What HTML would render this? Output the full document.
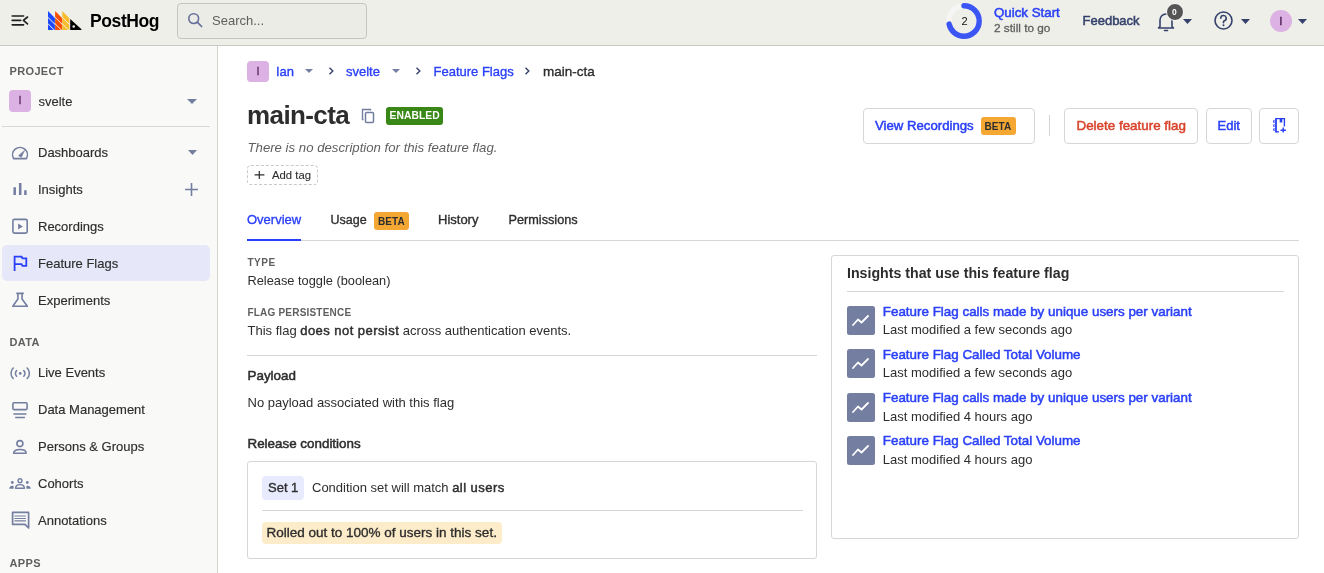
<!DOCTYPE html>
<html><head><meta charset="utf-8"><title>main-cta • Feature Flags • PostHog</title>
<style>
html,body{margin:0;padding:0;width:1324px;height:573px;overflow:hidden;background:#fff;font-family:"Liberation Sans", sans-serif;}
#root{position:absolute;left:0;top:0;width:1324px;height:573px;will-change:transform;}
.t{position:absolute;white-space:nowrap;}
.r{position:absolute;}
</style></head><body><div id="root">
<div class="r" style="left:0px;top:0px;width:1324px;height:45px;background:#eeefe9"></div>
<div class="r" style="left:0px;top:45px;width:1324px;height:1px;background:#c9cac4"></div>
<svg class="r" style="left:11px;top:14px" width="18" height="13" viewBox="0 0 18 13"><path d="M1.2 2H12.6M1.2 6.4H9.7M1.2 10.8H12.6M16.5 3L12.4 6.4L16.5 9.9" stroke="#1f1f1f" stroke-width="1.65" fill="none" stroke-linecap="round" stroke-linejoin="round"/></svg>
<svg class="r" style="left:48px;top:11px" width="35" height="20" viewBox="0 0 35 20"><path d="M0.00 0 L7.15 7.15 V19 H0.00 Z" fill="#1d4aff"/><path d="M-0.50 5.90 L7.60 14.00" stroke="#eeefe9" stroke-width="1.0"/><path d="M-0.50 12.30 L7.60 20.40" stroke="#eeefe9" stroke-width="1.0"/><path d="M7.15 0 V19" stroke="#eeefe9" stroke-width="0.25"/><path d="M7.15 0 L14.30 7.15 V19 H7.15 Z" fill="#f54e00"/><path d="M6.65 5.90 L14.75 14.00" stroke="#eeefe9" stroke-width="1.0"/><path d="M6.65 12.30 L14.75 20.40" stroke="#eeefe9" stroke-width="1.0"/><path d="M14.30 0 V19" stroke="#eeefe9" stroke-width="0.25"/><path d="M14.30 0 L21.45 7.15 V19 H14.30 Z" fill="#f9bd2b"/><path d="M13.80 5.90 L21.90 14.00" stroke="#eeefe9" stroke-width="1.0"/><path d="M13.80 12.30 L21.90 20.40" stroke="#eeefe9" stroke-width="1.0"/><path d="M21.45 0 V19" stroke="#eeefe9" stroke-width="0.25"/><path d="M22.2 7.9 L33.2 18.1 Q34.2 19 33 19 H22.2 Z" fill="#000"/><circle cx="25.7" cy="15.4" r="1.25" fill="#eeefe9"/></svg>
<div class="t" id="t0" style="left:90px;top:13.00px;font-size:17.5px;line-height:17.5px;color:#000;font-weight:700;letter-spacing:-0.4px;">PostHog</div>
<div class="r" style="left:177px;top:3px;width:190px;height:36px;border:1px solid #c4c5bf;border-radius:4px;box-sizing:border-box;background:#ebece6"></div>
<svg class="r" style="left:187px;top:12px" width="17" height="17" viewBox="0 0 17 17"><circle cx="6.7" cy="6.6" r="4.9" stroke="#67709a" stroke-width="1.6" fill="none"/><path d="M10.3 10.2L14.6 14.5" stroke="#67709a" stroke-width="1.7" stroke-linecap="round"/></svg>
<div class="t" id="t1" style="left:212px;top:14.01px;font-size:13px;line-height:13px;color:#5f5f5f;">Search...</div>
<svg class="r" style="left:946px;top:3px" width="36" height="36" viewBox="0 0 36 36"><circle cx="18" cy="18" r="15.2" stroke="#f5f5f3" stroke-width="5.4" fill="none"/><circle cx="18" cy="18" r="15.2" stroke="#3b55f5" stroke-width="5.4" fill="none" stroke-dasharray="68 100" stroke-linecap="round" transform="rotate(-90 18 18)"/></svg>
<div class="t" id="t2" style="left:961.5px;top:16.01px;font-size:11px;line-height:11px;color:#111;">2</div>
<div class="t" id="t3" style="left:994px;top:6.01px;font-size:13.3px;line-height:13.3px;color:#2a40f8;-webkit-text-stroke:0.5px #2a40f8;">Quick Start</div>
<div class="t" id="t4" style="left:994px;top:23.00px;font-size:11.8px;line-height:11.8px;color:#5f5f5f;-webkit-text-stroke:0.3px #5f5f5f;">2 still to go</div>
<div class="t" id="t5" style="left:1082.5px;top:14.01px;font-size:13px;line-height:13px;color:#35416b;-webkit-text-stroke:0.5px #35416b;">Feedback</div>
<svg class="r" style="left:1157px;top:11px" width="18" height="21" viewBox="0 0 18 21"><path d="M3 15.5 V9 A6 6 0 0 1 15 9 V15.5 L16.5 17 H1.5 Z" stroke="#35416b" stroke-width="1.6" fill="none" stroke-linejoin="round"/><path d="M7.5 19.5 H10.5" stroke="#35416b" stroke-width="1.6" stroke-linecap="round"/></svg>
<div class="r" style="left:1166px;top:3px;width:18px;height:18px;background:#555;border:1.5px solid #fff;border-radius:50%;box-sizing:border-box"></div>
<div class="t" id="t6" style="left:1172px;top:8.01px;font-size:8.5px;line-height:8.5px;color:#fff;font-weight:700;">0</div>
<svg class="r" style="left:1183px;top:19px" width="9" height="5" viewBox="0 0 9 5"><path d="M0 0H9L4.5 5Z" fill="#35416b"/></svg>
<svg class="r" style="left:1214px;top:11px" width="19" height="19" viewBox="0 0 19 19"><circle cx="9.5" cy="9.5" r="8.5" stroke="#35416b" stroke-width="1.6" fill="none"/><path d="M6.8 7.3 A2.7 2.7 0 1 1 10.4 9.8 C9.7 10.1 9.5 10.5 9.5 11.3 V11.8" stroke="#35416b" stroke-width="1.6" fill="none" stroke-linecap="round"/><circle cx="9.5" cy="14.3" r="1" fill="#35416b"/></svg>
<svg class="r" style="left:1240.5px;top:19px" width="9" height="5" viewBox="0 0 9 5"><path d="M0 0H9L4.5 5Z" fill="#35416b"/></svg>
<div class="r" style="left:1270px;top:10px;width:22px;height:22px;background:#dcb1e3;border-radius:50%"></div>
<div class="t" id="t7" style="left:1279.3px;top:16.01px;font-size:11.5px;line-height:11.5px;color:#4f2259;-webkit-text-stroke:0.4px #4f2259;">I</div>
<svg class="r" style="left:1298px;top:19px" width="9" height="5" viewBox="0 0 9 5"><path d="M0 0H9L4.5 5Z" fill="#35416b"/></svg>
<div class="r" style="left:0px;top:46px;width:217px;height:527px;background:#f9f9f7"></div>
<div class="r" style="left:217px;top:46px;width:1px;height:527px;background:#d3d4ce"></div>
<div class="t" id="t8" style="left:9.5px;top:66.01px;font-size:11px;line-height:11px;color:#5f5f5f;font-weight:700;letter-spacing:0.35px;">PROJECT</div>
<div class="r" style="left:9px;top:90px;width:22px;height:22px;background:#dcb1e3;border-radius:4px"></div>
<div class="t" id="t9" style="left:18.5px;top:95.01px;font-size:11px;line-height:11px;color:#5b2a63;-webkit-text-stroke:0.3px #5b2a63;">I</div>
<div class="t" id="t10" style="left:38.5px;top:95.01px;font-size:13px;line-height:13px;color:#2d2d2d;-webkit-text-stroke:0.1px #2d2d2d;">svelte</div>
<svg class="r" style="left:187px;top:99px" width="10" height="5" viewBox="0 0 10 5"><path d="M0 0H10L5.0 5Z" fill="#747ea1"/></svg>
<div class="r" style="left:2px;top:126px;width:208px;height:1px;background:#d8d8d6"></div>
<div class="r" style="left:2px;top:245px;width:208px;height:36px;background:#e6e8f9;border-radius:5px"></div>
<div class="t" id="t11" style="left:38px;top:146.01px;font-size:13px;line-height:13px;color:#2d2d2d;-webkit-text-stroke:0.15px #2d2d2d;">Dashboards</div>
<div class="t" id="t12" style="left:38px;top:183.01px;font-size:13px;line-height:13px;color:#2d2d2d;-webkit-text-stroke:0.15px #2d2d2d;">Insights</div>
<div class="t" id="t13" style="left:38px;top:220.01px;font-size:13px;line-height:13px;color:#2d2d2d;-webkit-text-stroke:0.15px #2d2d2d;">Recordings</div>
<div class="t" id="t14" style="left:38px;top:257.01px;font-size:13px;line-height:13px;color:#2d2d2d;-webkit-text-stroke:0.15px #2d2d2d;">Feature Flags</div>
<div class="t" id="t15" style="left:38px;top:294.01px;font-size:13px;line-height:13px;color:#2d2d2d;-webkit-text-stroke:0.15px #2d2d2d;">Experiments</div>
<svg class="r" style="left:188px;top:150px" width="9" height="5" viewBox="0 0 9 5"><path d="M0 0H9L4.5 5Z" fill="#747ea1"/></svg>
<svg class="r" style="left:184px;top:182px" width="15" height="15" viewBox="0 0 15 15"><path d="M7.5 1V14M1 7.5H14" stroke="#747ea1" stroke-width="1.6"/></svg>
<svg class="r" style="left:11px;top:146px" width="18" height="14" viewBox="0 0 18 14"><path d="M2.6 12.6 A7.4 7.4 0 1 1 15.4 12.6 Z" stroke="#747ea1" stroke-width="1.6" fill="none" stroke-linejoin="round"/><path d="M7.6 9.6 L13.6 4.4 L10.2 11.4 Z" fill="#747ea1" stroke="#747ea1" stroke-width="0.6" stroke-linejoin="round"/></svg>
<svg class="r" style="left:12px;top:182px" width="16" height="15" viewBox="0 0 16 15"><path d="M2.7 5.3V13.1M8.2 1V13.1M13.4 8.2V13.1" stroke="#747ea1" stroke-width="2.5"/></svg>
<svg class="r" style="left:12px;top:218px" width="17" height="17" viewBox="0 0 17 17"><rect x="0.9" y="1.4" width="14.3" height="13.7" rx="1.5" stroke="#747ea1" stroke-width="1.6" fill="none"/><path d="M6.1 5.6V11.4L10.8 8.5Z" fill="#747ea1"/></svg>
<svg class="r" style="left:12px;top:254px" width="17" height="19" viewBox="0 0 17 19"><path d="M2.6 16.9V2.7H9.6L10.5 4.3H14.3V11.8H10.5L9.6 10.1H2.6" stroke="#2a40f8" stroke-width="1.8" fill="none" stroke-linejoin="miter"/></svg>
<svg class="r" style="left:11px;top:291px" width="18" height="17" viewBox="0 0 18 17"><path d="M5.3 2.4H12.8M6.9 2.4V8L1.8 15.3H16.4L11 8V2.4" stroke="#747ea1" stroke-width="1.6" fill="none" stroke-linejoin="round"/></svg>
<div class="t" id="t16" style="left:9.5px;top:337.01px;font-size:11px;line-height:11px;color:#5f5f5f;font-weight:700;letter-spacing:0.35px;">DATA</div>
<div class="t" id="t17" style="left:38px;top:366.01px;font-size:13px;line-height:13px;color:#2d2d2d;-webkit-text-stroke:0.15px #2d2d2d;">Live Events</div>
<div class="t" id="t18" style="left:38px;top:403.01px;font-size:13px;line-height:13px;color:#2d2d2d;-webkit-text-stroke:0.15px #2d2d2d;">Data Management</div>
<div class="t" id="t19" style="left:38px;top:440.01px;font-size:13px;line-height:13px;color:#2d2d2d;-webkit-text-stroke:0.15px #2d2d2d;">Persons &amp; Groups</div>
<div class="t" id="t20" style="left:38px;top:477.01px;font-size:13px;line-height:13px;color:#2d2d2d;-webkit-text-stroke:0.15px #2d2d2d;">Cohorts</div>
<div class="t" id="t21" style="left:38px;top:514.01px;font-size:13px;line-height:13px;color:#2d2d2d;-webkit-text-stroke:0.15px #2d2d2d;">Annotations</div>
<svg class="r" style="left:9px;top:365px" width="21" height="16" viewBox="0 0 21 16"><path d="M4.3 3 A7.5 7.5 0 0 0 4.3 13.6M18.1 3 A7.5 7.5 0 0 1 18.1 13.6M7.6 5.6 A4 4 0 0 0 7.6 11.2M14.8 5.6 A4 4 0 0 1 14.8 11.2" stroke="#747ea1" stroke-width="1.5" fill="none" stroke-linecap="round" stroke-dasharray="3.2 0.9"/><circle cx="11.2" cy="8.4" r="1.4" fill="#747ea1"/></svg>
<svg class="r" style="left:11px;top:401px" width="18" height="19" viewBox="0 0 18 19"><rect x="1.9" y="1.8" width="14.2" height="6.8" rx="1" stroke="#747ea1" stroke-width="1.6" fill="none"/><path d="M2.4 13H15.5M4.2 16.5H13.9" stroke="#747ea1" stroke-width="1.5"/></svg>
<svg class="r" style="left:12px;top:437px" width="16" height="18" viewBox="0 0 16 18"><circle cx="7.9" cy="6.6" r="3.0" stroke="#747ea1" stroke-width="1.6" fill="none"/><path d="M1.6 16.3C1.6 13.8 4 12.6 7.9 12.6S14.2 13.8 14.2 16.3Z" stroke="#747ea1" stroke-width="1.5" fill="none" stroke-linejoin="round"/></svg>
<svg class="r" style="left:9px;top:477px" width="22" height="13" viewBox="0 0 22 13"><circle cx="11" cy="3.7" r="1.9" stroke="#747ea1" stroke-width="1.4" fill="none"/><path d="M6.6 11.2C6.6 8.6 8.6 7.6 11 7.6S15.4 8.6 15.4 11.2Z" stroke="#747ea1" stroke-width="1.4" fill="none" stroke-linejoin="round"/><circle cx="3.3" cy="5.5" r="1.4" fill="#747ea1"/><circle cx="18.3" cy="5.5" r="1.4" fill="#747ea1"/><path d="M0.3 11.8C0.3 9.8 1.5 8.8 3.5 8.8L4.6 8.9V11.8Z M21.7 11.8C21.7 9.8 20.5 8.8 18.5 8.8L17.4 8.9V11.8Z" fill="#747ea1"/></svg>
<svg class="r" style="left:11px;top:511px" width="19" height="19" viewBox="0 0 19 19"><path d="M1.6 1.3H17.6V17L14 13.3H1.6Z" stroke="#747ea1" stroke-width="1.7" fill="none" stroke-linejoin="round"/><path d="M3.4 5H14.9M3.4 7.5H14.9M3.4 9.9H14.9" stroke="#747ea1" stroke-width="1.2"/></svg>
<div class="t" id="t22" style="left:9.5px;top:558.01px;font-size:11px;line-height:11px;color:#5f5f5f;font-weight:700;letter-spacing:0.35px;">APPS</div>
<div class="r" style="left:247px;top:61px;width:22px;height:21px;background:#dcb1e3;border-radius:4px"></div>
<div class="t" id="t23" style="left:256.5px;top:66.01px;font-size:11px;line-height:11px;color:#5b2a63;-webkit-text-stroke:0.3px #5b2a63;">I</div>
<div class="t" id="t24" style="left:276px;top:65.01px;font-size:13px;line-height:13px;color:#2a40f8;-webkit-text-stroke:0.35px #2a40f8;">Ian</div>
<svg class="r" style="left:305px;top:69px" width="8" height="4" viewBox="0 0 8 4"><path d="M0 0H8L4.0 4Z" fill="#747ea1"/></svg>
<svg class="r" style="left:328px;top:66px" width="7" height="10" viewBox="0 0 7 10"><path d="M1.5 1.8L4.8 5L1.5 8.2" stroke="#35416b" stroke-width="1.4" fill="none"/></svg>
<div class="t" id="t25" style="left:346px;top:65.01px;font-size:13px;line-height:13px;color:#2a40f8;-webkit-text-stroke:0.35px #2a40f8;">svelte</div>
<svg class="r" style="left:392px;top:69px" width="8" height="4" viewBox="0 0 8 4"><path d="M0 0H8L4.0 4Z" fill="#747ea1"/></svg>
<svg class="r" style="left:415px;top:66px" width="7" height="10" viewBox="0 0 7 10"><path d="M1.5 1.8L4.8 5L1.5 8.2" stroke="#35416b" stroke-width="1.4" fill="none"/></svg>
<div class="t" id="t26" style="left:433.5px;top:65.01px;font-size:13px;line-height:13px;color:#2a40f8;-webkit-text-stroke:0.35px #2a40f8;">Feature Flags</div>
<svg class="r" style="left:524px;top:66px" width="7" height="10" viewBox="0 0 7 10"><path d="M1.5 1.8L4.8 5L1.5 8.2" stroke="#35416b" stroke-width="1.4" fill="none"/></svg>
<div class="t" id="t27" style="left:543px;top:65.01px;font-size:13.5px;line-height:13.5px;color:#2d2d2d;-webkit-text-stroke:0.35px #2d2d2d;">main-cta</div>
<div class="t" id="t28" style="left:247px;top:102.01px;font-size:26px;line-height:26px;color:#2d2d2d;font-weight:700;letter-spacing:-0.6px;">main-cta</div>
<svg class="r" style="left:361px;top:108px" width="14" height="16" viewBox="0 0 14 16"><path d="M2.5 11.5H1.5V1.5H9.5V2.5" stroke="#747ea1" stroke-width="1.4" fill="none"/><rect x="4.5" y="4.5" width="8" height="10" rx="1" stroke="#747ea1" stroke-width="1.5" fill="none"/></svg>
<div class="r" style="left:386px;top:107px;width:57px;height:18px;background:#388717;border-radius:3px"></div>
<div class="t" id="t29" style="left:389.5px;top:111.00px;font-size:10.3px;line-height:10.3px;color:#fff;font-weight:700;letter-spacing:0.05px;">ENABLED</div>
<div class="t" id="t30" style="left:247.5px;top:141.01px;font-size:13.2px;line-height:13.2px;color:#5f5f5f;font-style:italic;">There is no description for this feature flag.</div>
<div class="r" style="left:247px;top:165px;width:71px;height:20px;border:1px dashed #c9cac4;border-radius:4px;box-sizing:border-box"></div>
<svg class="r" style="left:254px;top:170px" width="11" height="10" viewBox="0 0 11 10"><path d="M5.3 1V9M0.6 4.9H10.4" stroke="#2d2d2d" stroke-width="1.2"/></svg>
<div class="t" id="t31" style="left:272px;top:170.00px;font-size:11.3px;line-height:11.3px;color:#2d2d2d;-webkit-text-stroke:0.1px #2d2d2d;">Add tag</div>
<div class="r" style="left:863px;top:108px;width:172px;height:36px;border:1px solid #d6d6d4;border-radius:4px;box-sizing:border-box;background:#fff"></div>
<div class="t" id="t32" style="left:875px;top:119.01px;font-size:13.2px;line-height:13.2px;color:#2a40f8;-webkit-text-stroke:0.5px #2a40f8;">View Recordings</div>
<div class="r" style="left:981px;top:117px;width:35px;height:18px;background:#f5a734;border-radius:3px"></div>
<div class="t" id="t33" style="left:984.5px;top:122.00px;font-size:10px;line-height:10px;color:#2d2d2d;font-weight:700;letter-spacing:0.1px;">BETA</div>
<div class="r" style="left:1049px;top:115px;width:1px;height:21px;background:#d6d6d4"></div>
<div class="r" style="left:1064px;top:108px;width:134px;height:36px;border:1px solid #d6d6d4;border-radius:4px;box-sizing:border-box;background:#fff"></div>
<div class="t" id="t34" style="left:1076.5px;top:119.00px;font-size:13.4px;line-height:13.4px;color:#d8432a;-webkit-text-stroke:0.5px #d8432a;">Delete feature flag</div>
<div class="r" style="left:1206px;top:108px;width:46px;height:36px;border:1px solid #d6d6d4;border-radius:4px;box-sizing:border-box;background:#fff"></div>
<div class="t" id="t35" style="left:1217.5px;top:119.01px;font-size:13px;line-height:13px;color:#2a40f8;-webkit-text-stroke:0.5px #2a40f8;">Edit</div>
<div class="r" style="left:1259px;top:108px;width:40px;height:36px;border:1px solid #d6d6d4;border-radius:4px;box-sizing:border-box;background:#fff"></div>
<svg class="r" style="left:1272px;top:117px" width="16" height="17" viewBox="0 0 16 17"><path d="M4 1.6H12.4V9.5" stroke="#2a40f8" stroke-width="1.4" fill="none"/><path d="M4 1V15.5" stroke="#2a40f8" stroke-width="1.8"/><path d="M2.6 3.4A1 1 0 0 0 2.6 5.4M2.6 7.5A1 1 0 0 0 2.6 9.5M2.6 11.6A1 1 0 0 0 2.6 13.6" stroke="#2a40f8" stroke-width="1.1" fill="none"/><path d="M4 14.8H7" stroke="#2a40f8" stroke-width="1.3"/><rect x="7.7" y="1.5" width="2.6" height="4" fill="#2a40f8"/><path d="M11.2 10.5V15.5M8.5 13.2H14" stroke="#2a40f8" stroke-width="1.5"/></svg>
<div class="t" id="t36" style="left:247px;top:213.01px;font-size:13px;line-height:13px;color:#2a40f8;-webkit-text-stroke:0.35px #2a40f8;">Overview</div>
<div class="t" id="t37" style="left:330.5px;top:214.00px;font-size:12.5px;line-height:12.5px;color:#2d2d2d;-webkit-text-stroke:0.35px #2d2d2d;">Usage</div>
<div class="r" style="left:374px;top:212px;width:35px;height:18px;background:#f5a734;border-radius:3px"></div>
<div class="t" id="t38" style="left:378px;top:217.00px;font-size:10px;line-height:10px;color:#2d2d2d;font-weight:700;letter-spacing:0.1px;">BETA</div>
<div class="t" id="t39" style="left:438px;top:213.01px;font-size:13px;line-height:13px;color:#2d2d2d;-webkit-text-stroke:0.35px #2d2d2d;">History</div>
<div class="t" id="t40" style="left:508.5px;top:214.00px;font-size:12.7px;line-height:12.7px;color:#2d2d2d;-webkit-text-stroke:0.35px #2d2d2d;">Permissions</div>
<div class="r" style="left:247px;top:240px;width:1052px;height:1px;background:#d6d6d4"></div>
<div class="r" style="left:247px;top:239px;width:54px;height:2px;background:#2a40f8"></div>
<div class="t" id="t41" style="left:247.5px;top:258.00px;font-size:10px;line-height:10px;color:#5f5f5f;font-weight:700;letter-spacing:0.5px;">TYPE</div>
<div class="t" id="t42" style="left:247.5px;top:275.01px;font-size:12.8px;line-height:12.8px;color:#2d2d2d;">Release toggle (boolean)</div>
<div class="t" id="t43" style="left:247.5px;top:308.00px;font-size:10px;line-height:10px;color:#5f5f5f;font-weight:700;letter-spacing:0.2px;">FLAG PERSISTENCE</div>
<div class="t" id="t44" style="left:247.5px;top:324.01px;font-size:13px;line-height:13px;color:#2d2d2d;">This flag <b style="font-weight:400;-webkit-text-stroke:0.45px #2d2d2d;letter-spacing:0.45px">does not persist</b> across authentication events.</div>
<div class="r" style="left:247px;top:355px;width:570px;height:1px;background:#d6d6d4"></div>
<div class="t" id="t45" style="left:247.5px;top:369.00px;font-size:13.4px;line-height:13.4px;color:#2d2d2d;-webkit-text-stroke:0.5px #2d2d2d;">Payload</div>
<div class="t" id="t46" style="left:247.5px;top:396.01px;font-size:13px;line-height:13px;color:#2d2d2d;">No payload associated with this flag</div>
<div class="t" id="t47" style="left:247.5px;top:437.00px;font-size:13.4px;line-height:13.4px;color:#2d2d2d;-webkit-text-stroke:0.5px #2d2d2d;">Release conditions</div>
<div class="r" style="left:247px;top:461px;width:570px;height:98px;border:1px solid #d6d6d4;border-radius:3px;box-sizing:border-box"></div>
<div class="r" style="left:262px;top:476px;width:42px;height:24px;background:#e8ebfd;border-radius:4px"></div>
<div class="t" id="t48" style="left:268px;top:481.01px;font-size:13px;line-height:13px;color:#2d2d2d;-webkit-text-stroke:0.35px #2d2d2d;">Set 1</div>
<div class="t" id="t49" style="left:312px;top:481.01px;font-size:13px;line-height:13px;color:#2d2d2d;">Condition set will match <b style="font-weight:400;-webkit-text-stroke:0.45px #2d2d2d;letter-spacing:0.45px">all users</b></div>
<div class="r" style="left:262px;top:510px;width:541px;height:1px;background:#d6d6d4"></div>
<div class="r" style="left:262px;top:522px;width:240px;height:22px;background:#fdecc9;border-radius:4px"></div>
<div class="t" id="t50" style="left:266.5px;top:526.01px;font-size:13.5px;line-height:13.5px;color:#2d2d2d;-webkit-text-stroke:0.35px #2d2d2d;">Rolled out to 100% of users in this set.</div>
<div class="r" style="left:831px;top:255px;width:468px;height:284px;border:1px solid #d6d6d4;border-radius:3px;box-sizing:border-box"></div>
<div class="t" id="t51" style="left:847px;top:266.01px;font-size:14.2px;line-height:14.2px;color:#2d2d2d;font-weight:700;">Insights that use this feature flag</div>
<div class="r" style="left:847px;top:291px;width:437px;height:1px;background:#d6d6d4"></div>
<svg class="r" style="left:847px;top:305.5px" width="28" height="29" viewBox="0 0 28 29"><rect x="0" y="0" width="28" height="29" rx="2.5" fill="#747ea1"/><path d="M6 19L11 13.5L14.5 16.5L21 10" stroke="#fff" stroke-width="1.8" fill="none" stroke-linejoin="round" stroke-linecap="round"/></svg>
<div class="t" id="t52" style="left:882.8px;top:305.00px;font-size:13.4px;line-height:13.4px;color:#2a40f8;-webkit-text-stroke:0.5px #2a40f8;">Feature Flag calls made by unique users per variant</div>
<div class="t" id="t53" style="left:882.8px;top:323.00px;font-size:13px;line-height:13px;color:#2d2d2d;">Last modified a few seconds ago</div>
<svg class="r" style="left:847px;top:349px" width="28" height="29" viewBox="0 0 28 29"><rect x="0" y="0" width="28" height="29" rx="2.5" fill="#747ea1"/><path d="M6 19L11 13.5L14.5 16.5L21 10" stroke="#fff" stroke-width="1.8" fill="none" stroke-linejoin="round" stroke-linecap="round"/></svg>
<div class="t" id="t54" style="left:882.8px;top:348.00px;font-size:13.4px;line-height:13.4px;color:#2a40f8;-webkit-text-stroke:0.5px #2a40f8;">Feature Flag Called Total Volume</div>
<div class="t" id="t55" style="left:882.8px;top:366.01px;font-size:13px;line-height:13px;color:#2d2d2d;">Last modified a few seconds ago</div>
<svg class="r" style="left:847px;top:392.5px" width="28" height="29" viewBox="0 0 28 29"><rect x="0" y="0" width="28" height="29" rx="2.5" fill="#747ea1"/><path d="M6 19L11 13.5L14.5 16.5L21 10" stroke="#fff" stroke-width="1.8" fill="none" stroke-linejoin="round" stroke-linecap="round"/></svg>
<div class="t" id="t56" style="left:882.8px;top:391.01px;font-size:13.4px;line-height:13.4px;color:#2a40f8;-webkit-text-stroke:0.5px #2a40f8;">Feature Flag calls made by unique users per variant</div>
<div class="t" id="t57" style="left:882.8px;top:410.01px;font-size:13px;line-height:13px;color:#2d2d2d;">Last modified 4 hours ago</div>
<svg class="r" style="left:847px;top:436px" width="28" height="29" viewBox="0 0 28 29"><rect x="0" y="0" width="28" height="29" rx="2.5" fill="#747ea1"/><path d="M6 19L11 13.5L14.5 16.5L21 10" stroke="#fff" stroke-width="1.8" fill="none" stroke-linejoin="round" stroke-linecap="round"/></svg>
<div class="t" id="t58" style="left:882.8px;top:434.01px;font-size:13.4px;line-height:13.4px;color:#2a40f8;-webkit-text-stroke:0.5px #2a40f8;">Feature Flag Called Total Volume</div>
<div class="t" id="t59" style="left:882.8px;top:453.01px;font-size:13px;line-height:13px;color:#2d2d2d;">Last modified 4 hours ago</div>
</div></body></html>
